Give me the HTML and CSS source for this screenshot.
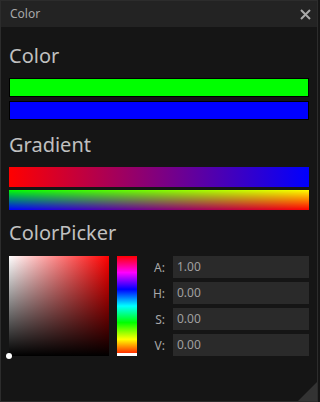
FILE: index.html
```html
<!DOCTYPE html>
<html>
<head>
<meta charset="utf-8">
<link rel="stylesheet" href="styles.css">
</head>
<body>
<div class="window">
  <div class="titlebar">
    <span class="title">Color</span>
    <svg class="close" width="11" height="11" viewBox="0 0 11 11"><path d="M1 1 L10 10 M10 1 L1 10" stroke="#a8a8a8" stroke-width="2" fill="none"/></svg>
  </div>
  <div class="content">
    <h2 class="heading h-color">Color</h2>
    <div class="bar solid green"></div>
    <div class="bar solid blue gap"></div>

    <h2 class="heading h-grad">Gradient</h2>
    <div class="bar grad1"></div>
    <div class="bar grad2 gap2"><div class="grad2-top"></div></div>

    <h2 class="heading h-picker">ColorPicker</h2>
    <div class="picker">
      <div class="sv">
        <div class="sv-dot"></div>
      </div>
      <div class="hue">
        <div class="hue-marker"></div>
      </div>
      <div class="fields">
        <div class="field"><span class="label">A:</span><div class="input">1.00</div></div>
        <div class="field"><span class="label">H:</span><div class="input">0.00</div></div>
        <div class="field"><span class="label">S:</span><div class="input">0.00</div></div>
        <div class="field"><span class="label">V:</span><div class="input">0.00</div></div>
      </div>
    </div>
  </div>
  <div class="grip"></div>
</div>
</body>
</html>
```
FILE: styles.css
```css
html, body {
  margin: 0;
  padding: 0;
  background: #151515;
}
body {
  font-family: "Noto Sans", "Open Sans", sans-serif;
}
.window {
  position: relative;
  width: 318px;
  height: 402px;
  box-sizing: border-box;
  border: 1px solid #2c2c2c;
  background: #151515;
  overflow: hidden;
}
.titlebar {
  height: 26px;
  background: #232323;
  display: flex;
  align-items: center;
  justify-content: space-between;
  padding: 0 6px 0 9px;
}
.title {
  font-size: 12px;
  color: #a8a8a8;
  line-height: 26px;
}
.close {
  display: block;
}
.content {
  padding: 0 8px;
}
.heading {
  margin: 0;
  font-weight: normal;
  font-size: 20px;
  line-height: 28px;
  color: #c0c0c0;
}
.h-color { margin-top: 15px; }
.h-grad { margin-top: 11px; }
.h-picker { margin-top: 9px; }
.bar {
  height: 20px;
  box-sizing: border-box;
  margin-top: 8px;
}
.solid {
  height: 19px;
  border: 1px solid #000;
}
.green { background: #00ff00; }
.blue { background: #0000ff; }
.bar.gap { margin-top: 4px; }
.bar.gap2 { margin-top: 3px; }
.grad1 {
  background: linear-gradient(to right, #ff0000, #0000ff);
}
.grad2 {
  position: relative;
  background: linear-gradient(to right, #0000ff, #ff0000);
}
.grad2-top {
  position: absolute;
  inset: 0;
  background: linear-gradient(to right, #00ff00, #ffff00);
  -webkit-mask-image: linear-gradient(to bottom, #000, transparent);
  mask-image: linear-gradient(to bottom, #000, transparent);
}
.picker {
  display: flex;
  margin-top: 9px;
}
.sv {
  position: relative;
  width: 100px;
  height: 100px;
  background:
    linear-gradient(to top, #000, rgba(0,0,0,0)),
    linear-gradient(to right, #fff, #ff0000);
}
.sv-dot {
  position: absolute;
  left: -3px;
  bottom: -3px;
  width: 6px;
  height: 6px;
  border-radius: 50%;
  background: #fff;
}
.hue {
  position: relative;
  width: 20px;
  height: 100px;
  margin-left: 8px;
  background: linear-gradient(to bottom, #ff0000, #ff00ff 16.6%, #0000ff 33.3%, #00ffff 50%, #00ff00 66.6%, #ffff00 83.3%, #ff0000);
}
.hue-marker {
  position: absolute;
  left: 0;
  right: 0;
  bottom: 0;
  height: 3px;
  background: #fff;
}
.fields {
  flex: 1;
  display: flex;
  flex-direction: column;
  gap: 4px;
}
.field {
  display: flex;
  align-items: center;
  height: 22px;
}
.label {
  width: 36px;
  padding-right: 8px;
  box-sizing: border-box;
  text-align: right;
  font-size: 12px;
  color: #a8a8a8;
}
.input {
  flex: 1;
  height: 22px;
  line-height: 22px;
  background: #2a2a2a;
  color: #a0a0a0;
  font-size: 12px;
  padding-left: 4px;
}
.grip {
  position: absolute;
  right: 0;
  bottom: 0;
  width: 0;
  height: 0;
  border-left: 19px solid transparent;
  border-bottom: 19px solid #333333;
}
```
